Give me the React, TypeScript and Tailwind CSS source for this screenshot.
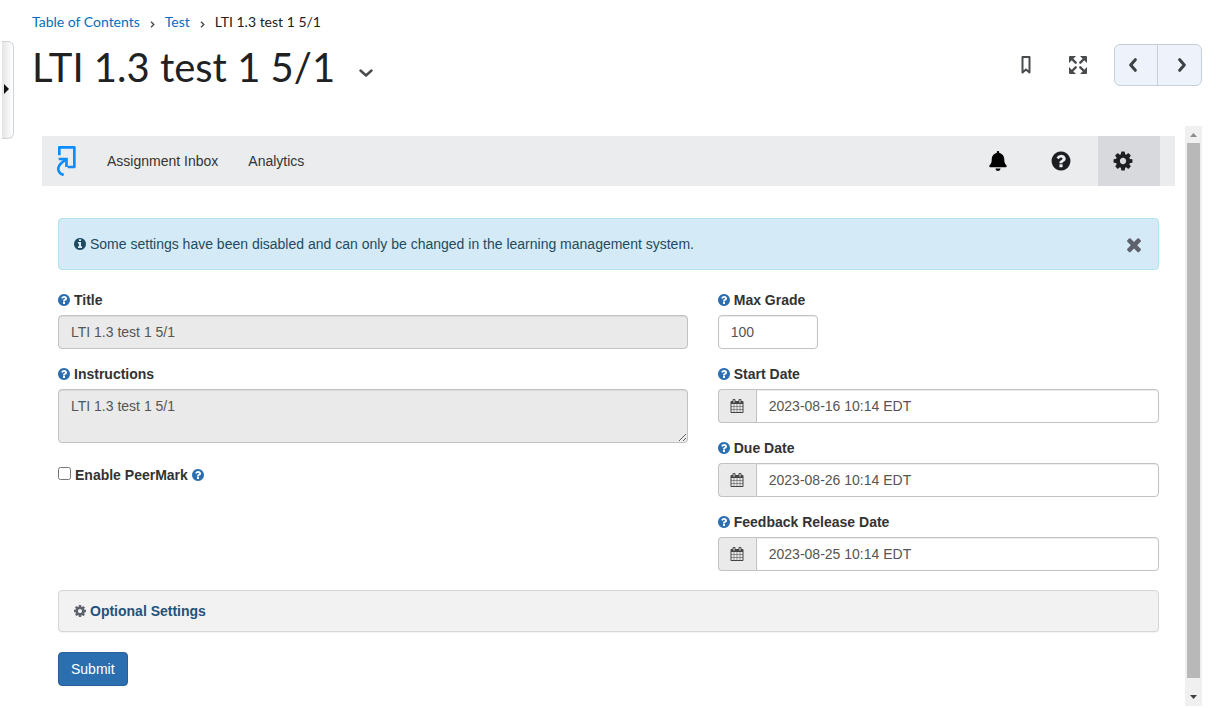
import { useState } from "react";
import type { ReactNode } from "react";
import { FaBell } from "react-icons/fa";

const ICONS = {
  cog: "M1152 896q0-106-75-181t-181-75-181 75-75 181 75 181 181 75 181-75 75-181zm512-109v222q0 12-8 23t-20 13l-185 28q-19 54-39 91 35 50 107 138 10 12 10 25t-9 23q-27 37-99 108t-94 71q-12 0-26-9l-138-108q-44 23-91 38-16 136-29 186-7 28-36 28h-222q-14 0-24.5-8.5t-11.5-21.5l-28-184q-49-16-90-37l-141 107q-10 9-25 9-14 0-25-11-126-114-165-168-7-10-7-23 0-12 8-23 15-21 51-66.5t54-70.5q-27-50-41-99l-183-27q-13-2-21-12.5t-8-23.5v-222q0-12 8-23t19-13l186-28q14-46 39-92-40-57-107-138-10-12-10-24 0-10 9-23 26-36 98.5-107.5t94.5-71.500q13 0 26 10l138 107q44-23 91-38 16-136 29-186 7-28 36-28h222q14 0 24.5 8.5t11.5 21.5l28 184q49 16 90 37l142-107q9-9 24-9 13 0 25 10 129 119 165 170 7 8 7 22 0 12-8 23-15 21-51 66.5t-54 70.5q26 50 41 98l183 28q13 2 21 12.5t8 23.5z",
  question: "M1024 1376v-192q0-14-9-23t-23-9h-192q-14 0-23 9t-9 23v192q0 14 9 23t23 9h192q14 0 23-9t9-23zm256-672q0-88-55.5-163t-138.5-116-170-41q-243 0-371 213-15 24 8 42l132 100q7 6 19 6 16 0 25-12 53-68 86-92 34-24 86-24 48 0 85.5 26t37.5 59q0 38-20 61t-68 45q-63 28-115.5 86.5t-52.5 125.5v36q0 14 9 23t23 9h192q14 0 23-9t9-23q0-19 21.5-49.5t54.5-49.5q32-18 49-28.5t46-35 44.5-48 28-60.5 12.5-81zm384 192q0 209-103 385.5t-279.5 279.5-385.5 103-385.5-103-279.5-279.5-103-385.5 103-385.5 279.5-279.5 385.5-103 385.5 103 279.5 279.5 103 385.5z",
  info: "M1152 1376v-160q0-14-9-23t-23-9h-96v-512q0-14-9-23t-23-9h-320q-14 0-23 9t-9 23v160q0 14 9 23t23 9h96v320h-96q-14 0-23 9t-9 23v160q0 14 9 23t23 9h448q14 0 23-9t9-23zm-128-896v-160q0-14-9-23t-23-9h-192q-14 0-23 9t-9 23v160q0 14 9 23t23 9h192q14 0 23-9t9-23zm640 416q0 209-103 385.5t-279.5 279.5-385.5 103-385.5-103-279.5-279.5-103-385.5 103-385.5 279.5-279.5 385.5-103 385.5 103 279.5 279.5 103 385.5z",
  times: "M1490 1322q0 40-28 68l-136 136q-28 28-68 28t-68-28l-294-294-294 294q-28 28-68 28t-68-28l-136-136q-28-28-28-68t28-68l294-294-294-294q-28-28-28-68t28-68l136-136q28-28 68-28t68 28l294 294 294-294q28-28 68-28t68 28l136 136q28 28 28 68t-28 68l-294 294 294 294q28 28 28 68z",
  calendar: "M192 1664h288v-288h-288v288zm352 0h320v-288h-320v288zm-352-352h288v-320h-288v320zm352 0h320v-320h-320v320zm-352-384h288v-288h-288v288zm736 736h320v-288h-320v288zm-384-736h320v-288h-320v288zm768 736h288v-288h-288v288zm-384-352h320v-320h-320v320zm-352-864v-288q0-13-9.5-22.5t-22.5-9.5h-64q-13 0-22.5 9.5t-9.5 22.5v288q0 13 9.5 22.5t22.5 9.5h64q13 0 22.5-9.5t9.5-22.5zm736 864h288v-320h-288v320zm-384-384h320v-288h-320v288zm384 0h288v-288h-288v288zm32-480v-288q0-13-9.5-22.5t-22.5-9.5h-64q-13 0-22.5 9.5t-9.5 22.5v288q0 13 9.5 22.5t22.5 9.5h64q13 0 22.5-9.5t9.5-22.5zm384-64v1280q0 52-38 90t-90 38h-1408q-52 0-90-38t-38-90v-1280q0-52 38-90t90-38h128v-96q0-66 47-113t113-47h64q66 0 113 47t47 113v96h384v-96q0-66 47-113t113-47h64q66 0 113 47t47 113v96h128q52 0 90 38t38 90z",
};

function Icon({ name, className }: { name: keyof typeof ICONS; className: string }) {
  // the calendar fills the whole em box, the round icons leave a side margin
  const viewBox = name === "calendar" ? "0 0 1792 1792" : "128 0 1536 1792";
  return (
    <svg viewBox={viewBox} fill="currentColor" className={`shrink-0 ${className}`} aria-hidden="true">
      <path d={ICONS[name]} />
    </svg>
  );
}

const HelpIcon = () => <Icon name="question" className="h-[14px] w-3 text-[#2c6fb0]" />;

function Crumb() {
  return (
    <svg viewBox="0 0 5 7" className="mx-[10px] mt-1 h-[7px] w-[5px]" fill="none" stroke="#494c4e" strokeWidth="1.4" aria-hidden="true">
      <path d="M1 .7 3.8 3.5 1 6.3" />
    </svg>
  );
}

const CONTROL = "h-[34px] border border-[#c2c2c2] px-3 text-sm text-[#555] shadow-[inset_0_1px_1px_rgba(0,0,0,0.075)]";

function Field({ id, label, children }: { id: string; label: string; children: ReactNode }) {
  return (
    <div className="mb-[15px]">
      <label htmlFor={id} className="mb-[5px] flex items-center gap-1 font-bold">
        <HelpIcon />
        {label}
      </label>
      {children}
    </div>
  );
}

const DATES = [
  { id: "start", label: "Start Date", value: "2023-08-16 10:14 EDT" },
  { id: "due", label: "Due Date", value: "2023-08-26 10:14 EDT" },
  { id: "feedback", label: "Feedback Release Date", value: "2023-08-25 10:14 EDT" },
];

function PageHeader() {
  return (
    <header className="font-[Lato,sans-serif] text-[#202122]">
      <nav aria-label="Breadcrumb" className="flex h-5 items-center text-sm">
        <a href="#toc" className="text-[#006fbf]">Table of Contents</a>
        <Crumb />
        <a href="#test" className="text-[#006fbf]">Test</a>
        <Crumb />
        <span>LTI 1.3 test 1 5/1</span>
      </nav>
      <div className="mt-[9px] flex h-[52px] items-center justify-between">
        <div className="flex items-center">
          <h1 className="text-[40px] leading-[52px]">LTI 1.3 test 1 5/1</h1>
          <button type="button" aria-label="Topic actions" className="ml-6 pt-3">
            <svg viewBox="0 0 14 8" className="h-2 w-[14px]" fill="none" stroke="#494c4e" strokeWidth="2.4" strokeLinecap="round" strokeLinejoin="round">
              <path d="M1.5 1.5 7 6.500l5.500-5" />
            </svg>
          </button>
        </div>
        <div className="flex items-center pb-1">
          <button type="button" aria-label="Bookmark" className="mr-[38px]">
            <svg viewBox="0 0 10 18" className="h-[18px] w-[10px]" fill="none" stroke="#494c4e" strokeWidth="2" strokeLinejoin="round">
              <path d="M1.5 1h7v15.500L5 13.500l-3.500 3z" />
            </svg>
          </button>
          <button type="button" aria-label="Full screen" className="mr-[27px]">
            <svg viewBox="0 0 18 18" className="h-[18px] w-[18px]" fill="#494c4e" stroke="#494c4e" strokeLinecap="round">
              <path stroke="none" d="M1 0h6L0 7V1a1 1 0 0 1 1-1zM17 0h-6l7 7V1a1 1 0 0 0-1-1zM1 18h6l-7-7v6a1 1 0 0 0 1 1zM17 18h-6l7-7v6a1 1 0 0 1-1 1z" />
              <path strokeWidth="2.4" d="m3 3 3.700 3.700M15 3l-3.700 3.700M3 15l3.700-3.700M15 15l-3.700-3.700" />
            </svg>
          </button>
          <div className="flex h-[42px] divide-x divide-[#c5cfd9] overflow-hidden rounded-md border border-[#c5cfd9] bg-[#eef3fb]">
            <button type="button" aria-label="Previous" className="flex w-[43px] items-center justify-center pr-[6px]">
              <svg viewBox="0 0 8 14" className="h-[14px] w-2" fill="none" stroke="#3f4244" strokeWidth="3" strokeLinecap="round" strokeLinejoin="round">
                <path d="M6.300 1.700 1.700 7l4.600 5.300" />
              </svg>
            </button>
            <button type="button" aria-label="Next" className="flex w-[43px] items-center justify-center pl-1">
              <svg viewBox="0 0 8 14" className="h-[14px] w-2" fill="none" stroke="#3f4244" strokeWidth="3" strokeLinecap="round" strokeLinejoin="round">
                <path d="M1.700 1.700 6.300 7l-4.600 5.300" />
              </svg>
            </button>
          </div>
        </div>
      </div>
    </header>
  );
}

function ToolBar() {
  return (
    <nav aria-label="Assignment" className="flex h-[50px] items-center bg-[#ebecee] px-[15px] text-[#333]">
      <svg viewBox="52 48 57 90" className="mr-[31px] h-[30px] w-[19px]" fill="none" stroke="#0b8dff" strokeWidth="8" role="img" aria-label="Logo">
        <path strokeLinejoin="round" d="M59 76V52H104V111H84" />
        <path d="M57 87H80.500V111" />
        <path d="M80 88C62 99 54 108 56 119 58 128 63 132 72 135" />
      </svg>
      <a href="#inbox" className="mr-[30px]">Assignment Inbox</a>
      <a href="#analytics">Analytics</a>
      <div className="ml-auto flex h-full text-[#1d1e22]">
        <button type="button" aria-label="Notifications" className="flex w-[62px] items-center pl-[15px] text-black">
          <FaBell className="h-5 w-[18px]" />
        </button>
        <button type="button" aria-label="Help" className="flex w-[62px] items-center pl-[15px]">
          <Icon name="question" className="h-[22px] w-5" />
        </button>
        <button type="button" aria-label="Settings" className="flex w-[62px] items-center bg-[#d8d9dd] pl-[15px]">
          <Icon name="cog" className="h-[22px] w-5" />
        </button>
      </div>
    </nav>
  );
}

function SettingsForm() {
  const [alertOpen, setAlertOpen] = useState(true);

  return (
    <form className="px-4 pt-8" onSubmit={(e) => e.preventDefault()}>
      {alertOpen && (
        <div role="alert" className="mb-5 flex h-[52px] items-center justify-between rounded border border-[#b2e4ec] bg-[#d4eaf7] px-[15px] text-[#1f4a60]">
          <p className="flex items-center gap-1">
            <Icon name="info" className="h-[14px] w-3" />
            Some settings have been disabled and can only be changed in the learning management system.
          </p>
          <button type="button" aria-label="Close" onClick={() => setAlertOpen(false)} className="text-[#5d626d]">
            <Icon name="times" className="h-[21px] w-[18px]" />
          </button>
        </div>
      )}

      <div className="-mx-[15px] flex">
        <div className="w-7/12 px-[15px]">
          <Field id="title" label="Title">
            <input id="title" type="text" disabled defaultValue="LTI 1.3 test 1 5/1" className={`${CONTROL} block w-full rounded bg-[#eaeaea]`} />
          </Field>
          <Field id="instructions" label="Instructions">
            <textarea id="instructions" disabled defaultValue="LTI 1.3 test 1 5/1" className={`${CONTROL} block min-h-[54px] w-full resize-y rounded bg-[#eaeaea] py-[6px]`} />
          </Field>
          <div className="flex items-center gap-1 pt-[7px] font-bold">
            <input id="peermark" type="checkbox" className="mb-[3px] h-[13px] w-[13px]" />
            <label htmlFor="peermark">Enable PeerMark</label>
            <HelpIcon />
          </div>
        </div>
        <div className="w-5/12 px-[15px]">
          <Field id="grade" label="Max Grade">
            <input id="grade" type="text" defaultValue="100" className={`${CONTROL} block w-[100px] rounded bg-white`} />
          </Field>
          {DATES.map((d) => (
            <Field key={d.id} id={d.id} label={d.label}>
              <div className="flex">
                <button type="button" aria-label={`Pick ${d.label}`} className="flex h-[34px] w-[38px] items-center justify-center rounded-l border border-r-0 border-[#c2c2c2] bg-[#eaeaea] text-[#444]">
                  <Icon name="calendar" className="h-[14px] w-[14px]" />
                </button>
                <input id={d.id} type="text" defaultValue={d.value} className={`${CONTROL} min-w-0 flex-1 rounded-r bg-white`} />
              </div>
            </Field>
          ))}
        </div>
      </div>

      <button type="button" className="mt-1 flex h-[42px] w-full items-center gap-1 rounded border border-[#d6d6d6] bg-[#f2f2f2] px-[15px] font-bold text-[#23527c] shadow-[0_1px_1px_rgba(0,0,0,0.05)]">
        <Icon name="cog" className="h-[14px] w-3 text-[#5d626d]" />
        Optional Settings
      </button>
      <button type="submit" className="mt-5 h-[34px] rounded border border-[#27609a] bg-[#2c6fb0] px-3 text-white">Submit</button>
    </form>
  );
}

function ScrollTrack() {
  return (
    <div aria-hidden="true" className="flex w-[17px] shrink-0 flex-col items-center bg-[#f0f0f0]">
      <svg viewBox="0 0 17 17" className="h-[17px] w-[17px]" fill="#8b8b8b"><path d="M5 11h7L8.500 7z" /></svg>
      <div className="w-[13px] flex-1 bg-[#b8b8b8]" />
      <svg viewBox="0 0 17 28" className="h-7 w-[17px]" fill="#404040"><path d="M5 17h7l-3.500 4z" /></svg>
    </div>
  );
}

export default function App() {
  return (
    <div className="flex min-h-screen items-start bg-white pl-[2px]">
      <button type="button" aria-label="Open side panel" className="mt-[41px] flex h-[98px] w-3 shrink-0 items-center rounded-r-md border border-l-0 border-[#cdd5dc] bg-linear-to-r from-[#e4e4e4] to-white pb-[2px] pl-[2px]">
        <svg viewBox="0 0 5 10" className="h-[10px] w-[5px]" fill="#111"><path d="M0 0v10l5-5z" /></svg>
      </button>
      <main className="min-w-0 flex-1 pt-3 pr-[14px] pl-[18px]">
        <PageHeader />
        <section className="mt-[33px] flex min-h-[580px] pl-[10px] font-['Liberation_Sans',Arial,sans-serif] text-sm text-[#333]">
          <div className="mr-[10px] min-w-0 flex-1 pt-[10px]">
            <ToolBar />
            <SettingsForm />
          </div>
          <ScrollTrack />
        </section>
      </main>
    </div>
  );
}
